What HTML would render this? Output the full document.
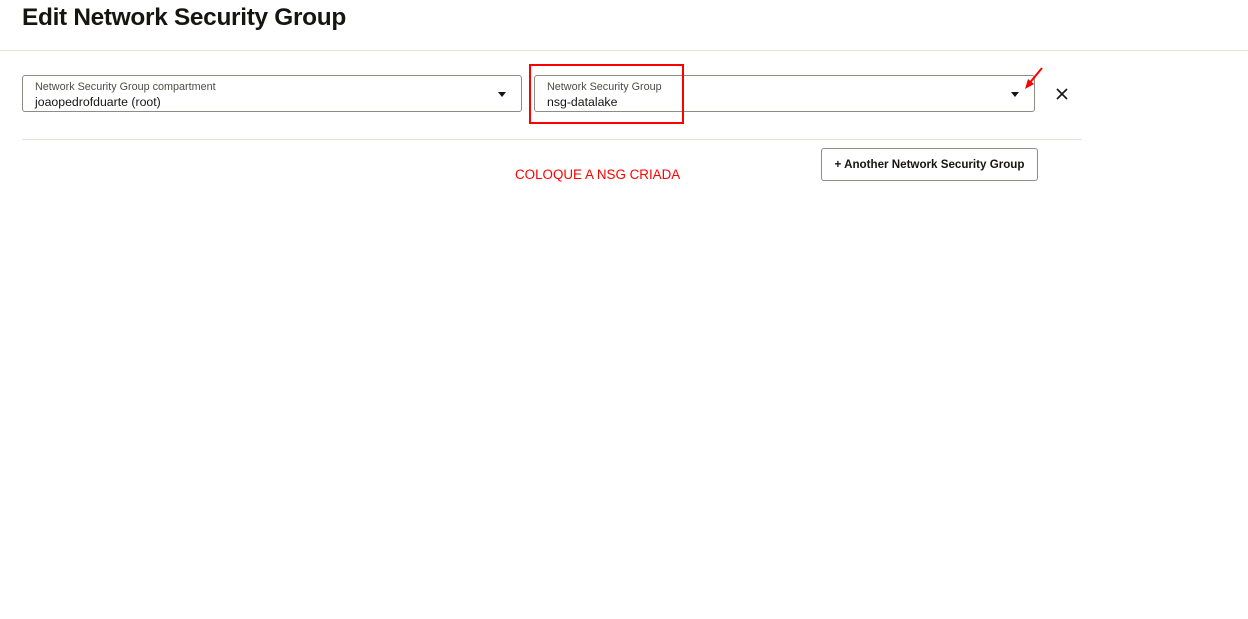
<!DOCTYPE html>
<html><head><meta charset="utf-8"><style>
body{margin:0;width:1248px;height:619px;background:#fff;font-family:"Liberation Sans",sans-serif;position:relative;overflow:hidden;color:#161513}
.abs{position:absolute}
h1{position:absolute;left:22px;top:4px;margin:0;font-size:24.4px;font-weight:bold;letter-spacing:-0.3px}
.hr{position:absolute;height:1px;background:#e4e1dd}
.field{position:absolute;top:75px;height:37px;border:1px solid #8f8c88;border-radius:3px;box-sizing:border-box}
.lab{position:absolute;left:12px;top:5px;font-size:10.8px;color:#4f4c48}
.val{position:absolute;left:12px;top:19px;font-size:12.3px}
.car{position:absolute;top:16px;width:0;height:0;border-left:4px solid transparent;border-right:4px solid transparent;border-top:5px solid #161513}
</style></head><body>
<h1>Edit Network Security Group</h1>
<div class="hr" style="left:0;top:50px;width:1248px"></div>
<div class="field" style="left:22px;width:500px"><div class="lab">Network Security Group compartment</div><div class="val">joaopedrofduarte (root)</div><div class="car" style="left:475px"></div></div>
<div class="field" style="left:534px;width:501px"><div class="lab">Network Security Group</div><div class="val">nsg-datalake</div><div class="car" style="left:476px"></div></div>
<div class="abs" style="left:529px;top:64px;width:151px;height:56px;border:2px solid #f00"></div>
<svg class="abs" style="left:1020px;top:64px" width="30" height="30"><line x1="22" y1="4" x2="8" y2="21" stroke="#f00" stroke-width="2"/><polygon points="5,25 8,15 14,20" fill="#f00"/></svg>
<svg class="abs" style="left:1056px;top:88px" width="12" height="12"><path d="M1 1L11 11M11 1L1 11" stroke="#161513" stroke-width="1.6"/></svg>
<div class="hr" style="left:22px;top:139px;width:1060px"></div>
<div class="abs" style="left:515px;top:167px;font-size:13.4px;color:#f00">COLOQUE A NSG CRIADA</div>
<div class="abs" style="left:821px;top:148px;width:217px;height:33px;border:1px solid #8f8c88;border-radius:3px;box-sizing:border-box;font-size:11.6px;font-weight:bold;line-height:31px;text-align:center;color:#161513">+ Another Network Security Group</div>
</body></html>
